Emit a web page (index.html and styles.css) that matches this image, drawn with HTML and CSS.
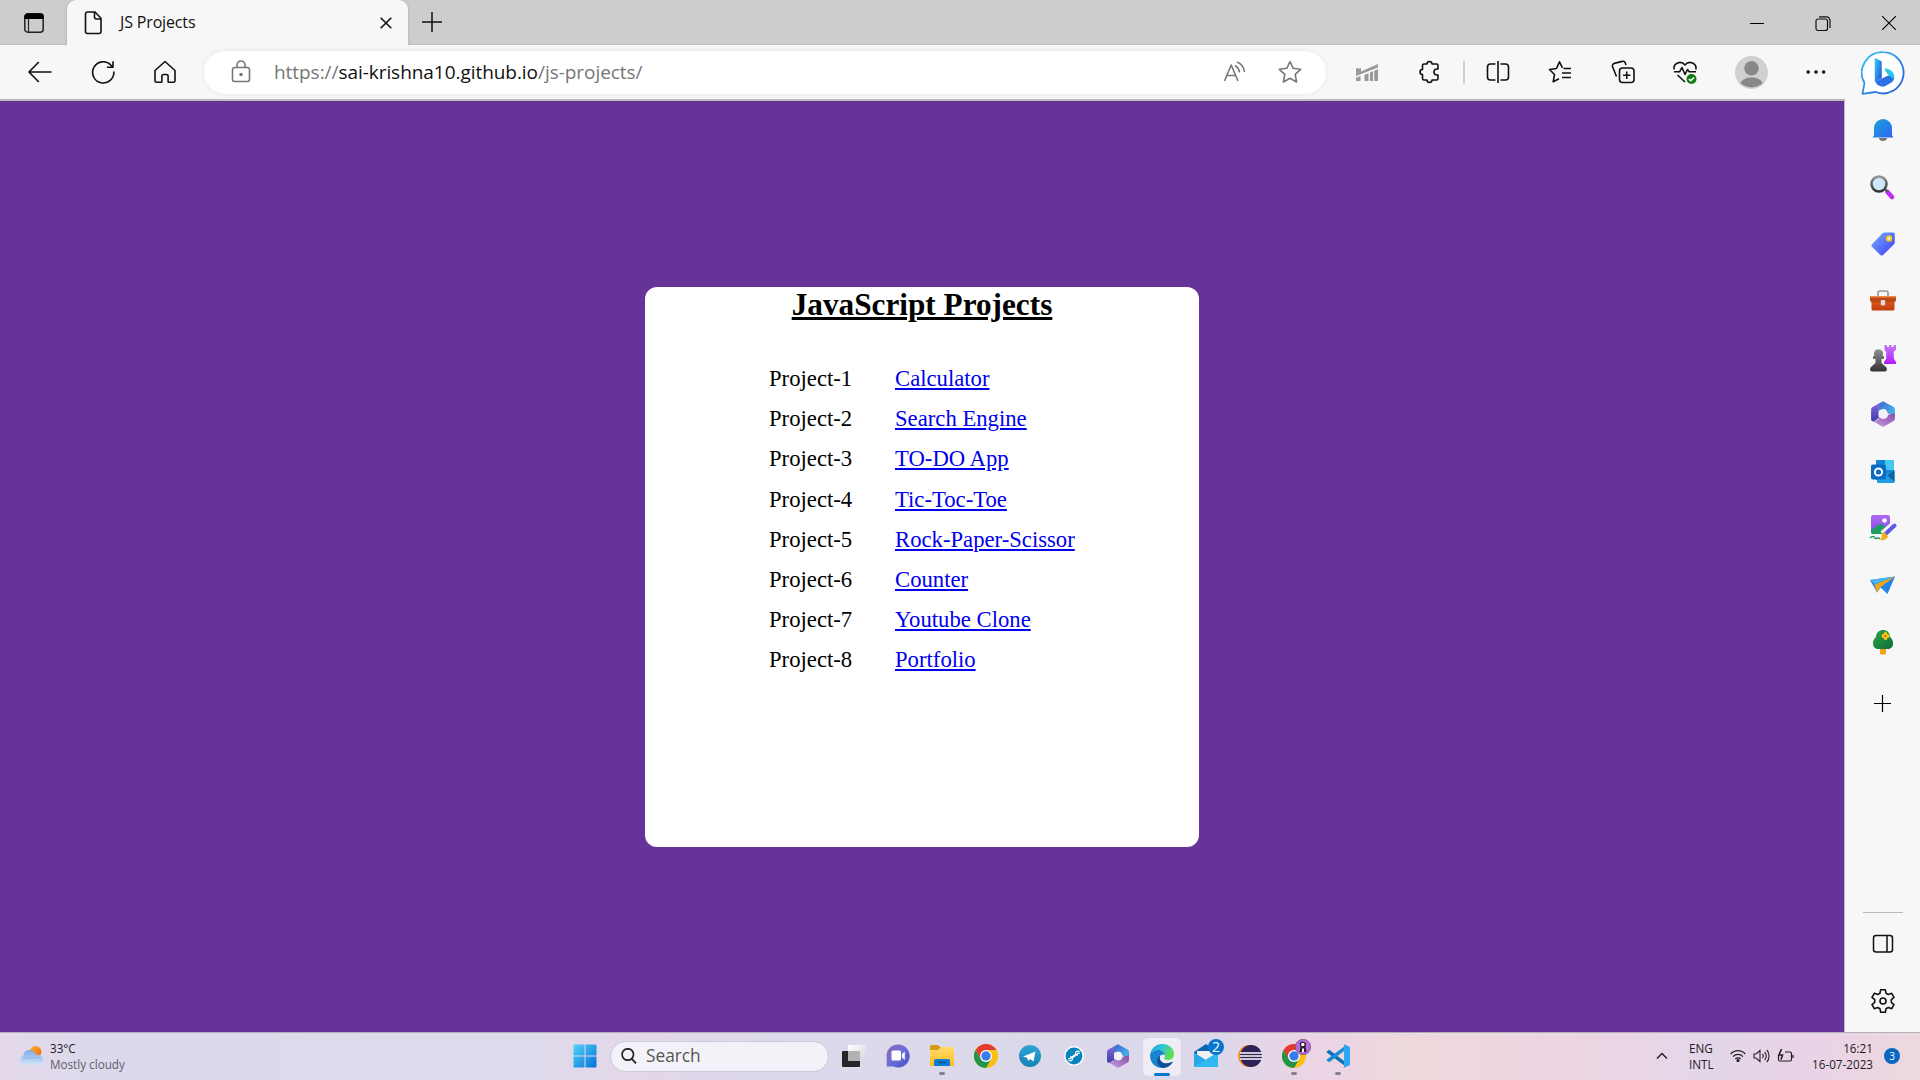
FILE: index.html
```html
<!DOCTYPE html>
<html lang="en">
<head>
<meta charset="utf-8">
<title>JS Projects</title>
<link rel="stylesheet" href="styles.css">
</head>
<body>
<svg class="defs" width="0" height="0" aria-hidden="true">
  <defs>
    <linearGradient id="blue" x1="0" y1="0" x2="1" y2="1"><stop offset="0" stop-color="#35c4f5"/><stop offset="1" stop-color="#2453dc"/></linearGradient>
    <linearGradient id="bell" x1="0" y1="0" x2="1" y2="1"><stop offset="0" stop-color="#17a5dc"/><stop offset="1" stop-color="#3264f0"/></linearGradient>
    <linearGradient id="tag" x1="0" y1="0" x2="1" y2="1"><stop offset="0" stop-color="#77b1ff"/><stop offset="1" stop-color="#3a38f5"/></linearGradient>
    <linearGradient id="grey" x1="0" y1="0" x2="0" y2="1"><stop offset="0" stop-color="#929292"/><stop offset="1" stop-color="#333"/></linearGradient>
    <linearGradient id="rook" x1="0" y1="0" x2="0" y2="1"><stop offset="0" stop-color="#c078f5"/><stop offset="1" stop-color="#b31dfa"/></linearGradient>
    <linearGradient id="case" x1="0" y1="0" x2="0" y2="1"><stop offset="0" stop-color="#f06a28"/><stop offset="1" stop-color="#bf3d0c"/></linearGradient>
    <linearGradient id="purp" x1="0" y1="0" x2="0" y2="1"><stop offset="0" stop-color="#b267ee"/><stop offset="1" stop-color="#7a50f0"/></linearGradient>
    <linearGradient id="tree" x1="0" y1="0" x2="1" y2="1"><stop offset="0" stop-color="#34a549"/><stop offset="1" stop-color="#0b6b37"/></linearGradient>
    <linearGradient id="win" x1="0" y1="0" x2="1" y2="1"><stop offset="0" stop-color="#51d2fb"/><stop offset="1" stop-color="#0473d4"/></linearGradient>
    <linearGradient id="chat" x1="0" y1="0" x2="1" y2="1"><stop offset="0" stop-color="#9a62a6"/><stop offset=".45" stop-color="#6e6fd8"/><stop offset="1" stop-color="#4b50c2"/></linearGradient>
    <linearGradient id="fold" x1="0" y1="0" x2="0" y2="1"><stop offset="0" stop-color="#ffdc6b"/><stop offset="1" stop-color="#fbbc22"/></linearGradient>
    <linearGradient id="tele" x1="0" y1="0" x2="0" y2="1"><stop offset="0" stop-color="#2fa5d6"/><stop offset="1" stop-color="#1781b5"/></linearGradient>
    <linearGradient id="edgeTop" x1="0" y1="0" x2="1" y2=".4"><stop offset="0" stop-color="#1a9fe0"/><stop offset=".5" stop-color="#2cc4d2"/><stop offset="1" stop-color="#5fe052"/></linearGradient>
    <linearGradient id="mA" x1="0" y1="0" x2="1" y2="1"><stop offset="0" stop-color="#3d63cf"/><stop offset="1" stop-color="#46c4ee"/></linearGradient>
    <linearGradient id="mB" x1="0" y1="0" x2="0" y2="1"><stop offset="0" stop-color="#8b68dc"/><stop offset="1" stop-color="#3b3fa9"/></linearGradient>
    <linearGradient id="mC" x1="0" y1="1" x2="1" y2="0"><stop offset="0" stop-color="#c99ae4"/><stop offset="1" stop-color="#8551a5"/></linearGradient>
    <linearGradient id="sun" x1="0" y1="0" x2="1" y2="1"><stop offset="0" stop-color="#fcb32c"/><stop offset="1" stop-color="#f06a14"/></linearGradient>
    <linearGradient id="cloud" x1="0" y1="0" x2="0" y2="1"><stop offset="0" stop-color="#7fa8e8"/><stop offset="1" stop-color="#d3e7fb"/></linearGradient>
    <linearGradient id="glass" x1="0" y1="0" x2="1" y2="1"><stop offset="0" stop-color="#fff"/><stop offset="1" stop-color="#d5d2dc"/></linearGradient>
    <symbol id="m365" viewBox="0 0 24 24">
      <path d="M8 2.500 12 .2l9.500 5.200c1.200.8 1.500 1.600 1.500 3V15l-7-4c0-3-3-4.500-6-3L7.500 9Z" fill="url(#mA)"/>
      <path d="M9.500 1.500 2.500 5.500C1.300 6.200 1 7 1 8.500v8c0 1.800 1 2.700 3 2.200L8 16V5c0-1.500.5-2.700 1.500-3.500Z" fill="url(#mB)"/>
      <path d="m2.300 18.200 8 4.800c1.200.7 2.200.7 3.400 0l7.600-4.300c1.200-.7 1.700-1.700 1.700-3V11l-6.500 2c0 3-3 4-5.500 3.200L8 14.500v2.200c-2 1.800-3.900 2.300-5.700 1.500Z" fill="url(#mC)"/>
      <circle cx="12" cy="12" r="4.100" fill="#f3f1f8"/>
    </symbol>
    <symbol id="chrome" viewBox="0 0 24 24">
      <circle cx="12" cy="12" r="12" fill="#fbbf12"/>
      <path d="M1.600 6A12 12 0 0 1 22.400 6H12L6.800 15Z" fill="#e33b2e"/>
      <path d="M1.600 6A12 12 0 0 0 12 24l5.200-9-5.200 2-5.200-2Z" fill="#21964a"/>
      <circle cx="12" cy="12" r="6" fill="#fff"/><circle cx="12" cy="12" r="4.700" fill="#377bf0"/>
    </symbol>
  </defs>
</svg>

<header class="titlebar">
  <div class="workspace"><svg width="22" height="22" viewBox="0 0 22 22"><rect x="1.800" y="1.800" width="18.400" height="18.400" rx="3" fill="none" stroke="#222" stroke-width="1.500"/><path d="M1.500 7V4.500a3 3 0 0 1 3-3h13a3 3 0 0 1 3 3V7Z"/><path d="M5.500 7v13" stroke="#222" stroke-width="1.200"/></svg></div>
  <div class="tab">
    <svg width="18" height="24" viewBox="0 0 18 24" fill="none" stroke="#111" stroke-width="1.600"><path d="M3.500 1H11l6 6.200v13.300a2 2 0 0 1-2 2H3.500a2 2 0 0 1-2-2V3a2 2 0 0 1 2-2Z"/><path d="M10.500 1v5a2 2 0 0 0 2 2H17"/></svg>
    <span class="tab-title">JS Projects</span>
    <svg class="tab-close" width="12" height="12" viewBox="0 0 12 12" stroke="#111" stroke-width="1.600"><path d="m.7.7 10.600 10.600M11.300.7.7 11.300"/></svg>
  </div>
  <svg class="new-tab" width="20" height="20" viewBox="0 0 20 20" stroke="#111" stroke-width="1.500"><path d="M10 0v20M0 10h20"/></svg>
  <div class="window-buttons">
    <svg width="14" height="14" viewBox="0 0 14 14"><path d="M0 7.500h14" stroke="#000"/></svg>
    <svg width="16" height="16" viewBox="0 0 16 16" fill="none" stroke="#111" stroke-width="1.200"><rect x="1" y="3" width="11.500" height="11.500" rx="2"/><path d="M4 .8h7.500a3.500 3.500 0 0 1 3.500 3.500V12"/></svg>
    <svg width="14" height="14" viewBox="0 0 14 14" stroke="#000" stroke-width="1.100"><path d="m0 0 14 14M14 0 0 14"/></svg>
  </div>
</header>

<nav class="toolbar">
  <div class="tool"><svg width="24" height="24" viewBox="0 0 24 24"><path d="M23.500 12H1M10.800 2 1 12l9.800 10"/></svg></div>
  <div class="tool"><svg width="24" height="24" viewBox="0 0 24 24"><path d="M22.800 11.500A10.600 10.600 0 1 1 20 5.200L21.800 7M22 1.200V7.200h-6"/></svg></div>
  <div class="tool"><svg width="24" height="24" viewBox="0 0 24 24"><path d="M2 10.500 12 1.500l10 9v10.300a1.500 1.500 0 0 1-1.500 1.500H16a.9.900 0 0 1-.9-.9v-5.300A1.600 1.600 0 0 0 13.500 14.500h-3a1.600 1.600 0 0 0-1.600 1.600v5.300a.9.900 0 0 1-.9.900H3.500A1.500 1.500 0 0 1 2 20.800Z"/></svg></div>
  <div class="address">
    <svg class="lock" width="20" height="24" viewBox="0 0 20 24"><rect x="1.500" y="7.500" width="17" height="14" rx="2.200"/><path d="M6 7.500V5a4 4 0 0 1 8 0v2.500"/><circle cx="10" cy="14.500" r="1" fill="#666"/></svg>
    <span class="url">https://<b>sai-krishna10.github.io</b>/js-projects/</span>
    <svg class="read" width="24" height="24" viewBox="0 0 24 24"><path d="m1.500 21 6.700-16 6.800 16M4 15.500h8.500M12 5.500a9 9 0 0 1 4.500 7M14 2a12 12 0 0 1 7.500 10"/></svg>
    <svg width="24" height="24" viewBox="0 0 24 24"><path d="m12 1.500 3.200 6.800 7.500 1-5.500 5.100 1.400 7.600-6.600-3.700-6.600 3.700 1.400-7.600-5.500-5.100 7.500-1Z"/></svg>
  </div>
  <div class="tool after-address"><svg width="24" height="24" viewBox="0 0 24 24"><g stroke="none" fill="#999"><path d="M1 8.500 3 8l1 .8L6 8v3.500L23 4v3.500L1 16ZM1 17.800l4.500-1.700V21H1ZM9.500 14.700l4-1.500V21h-4ZM15 12.500l3-1.200V21h-3ZM19.200 10.800 23 9.300V21h-3.800Z"/></g></svg></div>
  <div class="tool"><svg width="24" height="24" viewBox="0 0 24 24" stroke-width="1.800"><path d="M7 4h3a2.500 2.500 0 0 1 5 0h4.500A1.500 1.500 0 0 1 21 5.500V9h-1a3 3 0 0 0 0 6h1v3.500a1.500 1.500 0 0 1-1.500 1.500H15a2.500 2.500 0 0 1-5 0H7a1.500 1.500 0 0 1-1.500-1.500V14.500a2.500 2.500 0 0 1 0-5v-4A1.500 1.500 0 0 1 7 4Z"/></svg></div>
  <div class="divider"></div>
  <div class="tool"><svg width="24" height="24" viewBox="0 0 24 24" stroke-width="1.700"><path d="M12 1v22M9.500 4h-5a3 3 0 0 0-3 3v10a3 3 0 0 0 3 3h5M14.500 4h5a3 3 0 0 1 3 3v10a3 3 0 0 1-3 3h-5"/></svg></div>
  <div class="tool"><svg width="24" height="24" viewBox="0 0 24 24"><path d="M14.500 8 11.500 1.800 8.500 8.500l-7 1 5 5-1.300 7.300L11 18.700M15.500 8.500H23M14 13h9M14 17.500h9"/></svg></div>
  <div class="tool"><svg width="24" height="24" viewBox="0 0 24 24"><rect x="8.500" y="8" width="14.500" height="14.500" rx="3"/><path d="M15.750 11.500v7.500M12 15.250h7.500M5.500 16.500 1.500 6.500a2.500 2.500 0 0 1 1.700-3.100l8-2A2.500 2.500 0 0 1 14.300 3l.7 2"/></svg></div>
  <div class="tool"><svg width="24" height="24" viewBox="0 0 24 24"><path d="M1.200 9.500C-.2 3 8 0 12 5c4-5 12.200-2 10.800 4.500M1 11.800h5.500L9 7.500l3 7 2.500-5 1.700 2.300H23M4.500 15l7.500 7"/><circle cx="18.500" cy="19" r="5" fill="#107c10" stroke="none"/><path class="tick" d="m16 19 1.800 1.800 3.200-3.300"/></svg></div>
  <div class="tool profile"><svg width="33" height="33" viewBox="0 0 33 33"><circle cx="16.500" cy="16.500" r="16.500" fill="#d2d0ce" stroke="none"/><circle cx="16.500" cy="12.300" r="7.200" fill="#8a8886" stroke="none"/><path d="M5.500 27C8 19.500 25 19.500 27.500 27a16 16 0 0 1-22 0Z" fill="#8a8886" stroke="none"/></svg></div>
  <div class="tool more"><svg width="24" height="24" viewBox="0 0 24 24"><g fill="#111" stroke="none"><circle cx="4.200" cy="12" r="1.800"/><circle cx="12" cy="12" r="1.800"/><circle cx="19.600" cy="12" r="1.800"/></g></svg></div>
  <div class="tool bing"><svg width="44" height="44" viewBox="0 0 44 44"><path d="M22 1.200A20.600 20.600 0 1 1 14.500 41L1.500 42.800 3.500 32A20.600 20.600 0 0 1 22 1.200Z" fill="#fff" stroke="url(#blue)" stroke-width="1.800"/><path d="m14.500 8 5.500 3v15.500L14.500 30Z" fill="url(#blue)" stroke="url(#blue)" stroke-width="1.500"/><path d="M14.500 30.500 26 25l6-2c2.500 3 1 7-2 8.800l-6 3.500c-3 1.500-9-1.300-9.500-4.800Z" fill="#2c72e3" stroke="none"/><path d="M23.500 17c7 1.500 11 5 9 11-3-3.500-6.500-3-9-11Z" fill="#28c8ea" stroke="none"/></svg></div>
</nav>

<div class="browser-body">
  <main class="page">
    <section class="card">
      <h1>JavaScript Projects</h1>
      <div class="projects">
        <span>Project-1</span><a href="#">Calculator</a>
        <span>Project-2</span><a href="#">Search Engine</a>
        <span>Project-3</span><a href="#">TO-DO App</a>
        <span>Project-4</span><a href="#">Tic-Toc-Toe</a>
        <span>Project-5</span><a href="#">Rock-Paper-Scissor</a>
        <span>Project-6</span><a href="#">Counter</a>
        <span>Project-7</span><a href="#">Youtube Clone</a>
        <span>Project-8</span><a href="#">Portfolio</a>
      </div>
    </section>
  </main>
  <aside class="sidebar">
    <div class="side"><svg width="26" height="26" viewBox="0 0 26 26"><path d="M9 21h8c0 4-8 4-8 0Z" fill="#747474"/><path d="M4 18V11a9 9 0 0 1 18 0v7l1.300 2.500H2.700Z" fill="url(#bell)"/></svg></div>
    <div class="side"><svg width="26" height="26" viewBox="0 0 26 26"><path d="m17.500 18 4.500 5" stroke="#c02df0" stroke-width="4.500" stroke-linecap="round"/><path d="m14 14 4 4" stroke="#555" stroke-width="2"/><circle cx="9" cy="10" r="7.500" fill="#cce7fb" stroke="url(#grey)" stroke-width="2.600"/></svg></div>
    <div class="side"><svg width="26" height="26" viewBox="0 0 26 26"><path d="M14.500 1.500H23A1.800 1.800 0 0 1 24.800 3.300V11c0 1-.3 1.700-1 2.400L13 24c-.8.8-1.800.8-2.600 0L2 15.800c-.8-.8-.8-1.800 0-2.600L12.500 2.300c.6-.5 1.200-.8 2-.8Z" fill="url(#tag)"/><circle cx="19" cy="7.500" r="2.300" fill="#e7eef8" stroke="#f6c712" stroke-width="1.800"/></svg></div>
    <div class="side"><svg width="28" height="26" viewBox="0 0 28 26"><path d="M9 8V5a2 2 0 0 1 2-2h6a2 2 0 0 1 2 2v3" fill="none" stroke="#999" stroke-width="1.700"/><rect x="2.500" y="8" width="23" height="14.500" rx="1.500" fill="url(#case)"/><path d="M1 8h26v3.500a3 3 0 0 1-3 3H4a3 3 0 0 1-3-3Z" fill="#bd4717"/><path d="M1 8h26v1.500H1Z" fill="#ef8b4c"/><rect x="11.800" y="12" width="4.400" height="5.500" rx="1" fill="#ddd"/></svg></div>
    <div class="side"><svg width="28" height="28" viewBox="0 0 28 28"><path d="M15.500 1h2.500v2h2V1h2.500v2h2V1H27v4.500L24.800 8v6.500L27 18v2H15v-2l2.200-3.500V8L15.500 5.500Z" fill="url(#rook)"/><path d="M5.500 12A4.600 4.600 0 1 1 13.500 12h1.500v3h-2.500v4l4.500 4c1.500 1.300 1 4.500-1 4.500H3c-2 0-2.500-3.200-1-4.500l4.500-4v-4H4v-3Z" fill="url(#grey)"/></svg></div>
    <div class="side"><svg width="26" height="26"><use href="#m365"/></svg></div>
    <div class="side"><svg width="26" height="26" viewBox="0 0 26 26"><path d="M6 2h18v20H6Z" fill="#1683d4"/><path d="M15 2h9v10h-9Z" fill="#45c7f4"/><path d="m7 20 17.500-7.500V24a1 1 0 0 1-1 1H8a1 1 0 0 1-1-1Z" fill="#219ee2"/><path d="m17 17 7.500-4.500V24Z" fill="#1263a2"/><rect x="1" y="6.500" width="15" height="15" rx="1.800" fill="#0b6ac2"/><circle cx="8.500" cy="14" r="3.600" fill="none" stroke="#fff" stroke-width="2"/></svg></div>
    <div class="side"><svg width="28" height="28" viewBox="0 0 28 28"><rect x="2" y="1" width="19" height="19" rx="2.200" fill="url(#purp)"/><circle cx="15.500" cy="6.500" r="2.300" fill="#fff"/><path d="m2 16 8-5.500c1.300-.8 2-.8 3.200 0L21 16v2a2 2 0 0 1-2 2H4a2 2 0 0 1-2-2Z" fill="#209b64"/><path d="M14 20.500 27 9.500" stroke="#f7f7f7" stroke-width="8"/><path d="m17.500 19 8-7.500" stroke="#6258eb" stroke-width="4" stroke-linecap="round"/><path d="M14.500 17.500 19 22c-1 4-5 5-8 4 2.500-2 1-6 3.500-8.500Z" fill="#f2b01b"/><path d="M1 24c2-2 4-2 5 0s3-2 5 1" fill="none" stroke="#22976c" stroke-width="1.500"/></svg></div>
    <div class="side"><svg width="28" height="26" viewBox="0 0 28 26"><path d="m1 8 25-3.500-7.500 17.500-7-6.500-3.500 5Z" fill="#2585e8"/><path d="M1 8 26 4.500 6 12Z" fill="#49b5f5"/><path d="M5.500 12.500 26 4.500 11 15.500l-3 5.500Z" fill="#f1a416"/></svg></div>
    <div class="side"><svg width="26" height="26" viewBox="0 0 26 26"><rect x="10" y="18" width="6" height="7.500" rx="1" fill="#f1a01c"/><path d="M6 8C6-1.500 20-1.500 20 8c5 4 3.500 12-2 12H8C2.500 20 1 12 6 8Z" fill="url(#tree)"/><g fill="#ffc51c"><circle cx="15.500" cy="5" r="1.900"/><circle cx="15.500" cy="9" r="1.900"/><circle cx="13.500" cy="7" r="1.900"/><circle cx="17.500" cy="7" r="1.900"/></g><circle cx="15.500" cy="7" r="1.200" fill="#d46b08"/></svg></div>
    <div class="side add"><svg width="17" height="17" viewBox="0 0 17 17" stroke="#000" stroke-width="1.200"><path d="M8.500 0v17M0 8.500h17"/></svg></div>
    <div class="side-bottom">
      <div class="side"><svg width="22" height="22" viewBox="0 0 22 22" fill="none" stroke="#111" stroke-width="1.500"><rect x="1.500" y="2.500" width="19" height="16.500" rx="2.500"/><path d="M15 2.500V19"/></svg></div>
      <div class="side"><svg width="26" height="26" viewBox="0 0 26 26" fill="none" stroke="#111" stroke-width="1.600" stroke-linejoin="round"><circle cx="13" cy="13" r="3"/><path d="M10.700 1.700h4.600l.7 3.500 2.300 1.300 3.400-1.200L24 9.300 21.300 11.700v2.600L24 16.700l-2.300 4-3.400-1.200L16 20.800l-.7 3.500h-4.600l-.7-3.500-2.300-1.300-3.400 1.200-2.300-4 2.700-2.400v-2.600L2 9.300l2.300-4 3.400 1.200L10 5.200Z"/></svg></div>
    </div>
  </aside>
</div>

<footer class="taskbar">
  <div class="weather">
    <svg width="26" height="24" viewBox="0 0 26 24"><circle cx="17.500" cy="8" r="6" fill="url(#sun)"/><path d="M6 21a5 5 0 0 1-.5-9.500C6 4.500 15.500 4.500 18 10.500 27 10 27 21 20 21Z" fill="url(#cloud)"/><path d="M6 15c5-3 8 0 10-1s5-1 7 1" fill="none" stroke="#8fb5ea"/></svg>
    <div class="weather-text"><span>33°C</span><span class="muted">Mostly cloudy</span></div>
  </div>
  <div class="apps">
    <div class="app"><svg width="24" height="24" viewBox="0 0 24 24" fill="url(#win)"><path d="M1.500.5h10v11H.5v-10a1 1 0 0 1 1-1ZM12.500.5h10a1 1 0 0 1 1 1v10h-11ZM.5 12.500h11v11h-10a1 1 0 0 1-1-1ZM12.500 12.500h11v10a1 1 0 0 1-1 1h-10Z"/></svg></div>
    <div class="search"><svg width="16" height="16" viewBox="0 0 16 16" fill="none" stroke="#222" stroke-width="1.700"><circle cx="6.800" cy="6.500" r="5.700"/><path d="m10.800 10.800 4.200 4.500"/></svg><span>Search</span></div>
    <div class="app"><svg width="26" height="24" viewBox="0 0 26 24"><rect x="1" y="7" width="18" height="16" rx="1" fill="#262628"/><rect x="7" y="1" width="18" height="16" rx="1" fill="url(#glass)"/><path d="M7 7h12v10H7Z" fill="#b2b2b3"/></svg></div>
    <div class="app"><svg width="24" height="24" viewBox="0 0 24 24"><path d="M12 .5a11.500 11.500 0 1 1-4.500 22H.7V14A11.500 11.500 0 0 1 12 .5Z" fill="url(#chat)"/><rect x="5.500" y="6.500" width="9.500" height="10" rx="1.500" fill="#fff"/><path d="m16 10 2.800-2.500v8.500L16 13.500Z" fill="#fff"/></svg></div>
    <div class="app running"><svg width="24" height="24" viewBox="0 0 24 24"><path d="M0 2a1 1 0 0 1 1-1h7l2 2h13a1 1 0 0 1 1 1v8H0Z" fill="#d69a10"/><path d="M0 6h8l3-3h12a1 1 0 0 1 1 1v18H0Z" fill="url(#fold)"/><path d="M4 22v-5a2 2 0 0 1 2-2h12a2 2 0 0 1 2 2v5Z" fill="#0f7cd4"/><path d="M8 18.500h8" stroke="#0a4f91" stroke-width="1.500"/></svg></div>
    <div class="app"><svg width="24" height="24"><use href="#chrome"/></svg></div>
    <div class="app"><svg width="22" height="22" viewBox="0 0 22 22"><circle cx="11" cy="11" r="11" fill="url(#tele)"/><path d="m4 11.500 12.500-5-2 10-3.500-2.500-2 2-.8-3.300Z" fill="#fff"/></svg></div>
    <div class="app"><svg width="20" height="20" viewBox="0 0 20 20"><circle cx="10" cy="10" r="9.200" fill="#0984bd" stroke="#fff" stroke-width="1.500"/><path d="m7.500 11.800 5-3.600" stroke="#fff" stroke-width="2.200"/><path d="M4.300 12.600 6.400 12.700 7 10.900A2.100 2.100 0 1 1 4.500 14M15.700 7.400 13.600 7.300 13 9.100A2.100 2.100 0 1 1 15.500 6" stroke="#fff" stroke-width="1.200" fill="none"/></svg></div>
    <div class="app"><svg width="24" height="24"><use href="#m365"/></svg></div>
    <div class="app active"><svg width="24" height="24" viewBox="0 0 24 24"><path d="M.1 11C1 4 6 0 12.300 0 19 0 24 4.500 24 10c0 4-3 6-6 6-2.500 0-4-1-4-2 .8-1 1-1.500 1-2.500 0-3-3-5.500-6.500-5.500C4.500 6 1.300 8 .1 11Z" fill="url(#edgeTop)"/><path d="M.1 11C1.300 7.500 4.500 6 8.500 6c3.500 0 6.500 2.500 6.500 5.500-1-1.500-3.500-1.500-4.800.5C8 15 10 21 16 23.300 8 26-.5 20 .1 11Z" fill="#1784d2"/><path d="M10.200 12c-1.700 4 2 7.300 6.300 7.300 2.500 0 4.200-.8 5.500-1.500.8-.4 1 .1.600.7C18 25.500 8 26 7 17c-.2-2.500 1.200-4.300 3.200-5Z" fill="#0d4f99"/></svg></div>
    <div class="app mail"><svg width="24" height="24" viewBox="0 0 24 24"><path d="M0 8 12 0l12 8v14H0Z" fill="#0b66ae"/><path d="M3 7h18v7l-9 6-9-6Z" fill="#f1f1f4"/><path d="M0 8.500 12 16 24 8.500V22a1 1 0 0 1-1 1H1a1 1 0 0 1-1-1Z" fill="#2aa5e8"/><path d="M0 22.500 24 8.500V22a1 1 0 0 1-1 1H1Z" fill="#30b9f0"/></svg><span class="count">2</span></div>
    <div class="app"><svg width="24" height="22" viewBox="0 0 24 22"><circle cx="11" cy="11" r="11" fill="#f7941e"/><circle cx="13" cy="11" r="11" fill="#2c2255"/><path d="M2 8h22M2 11h22M2 14h22" stroke="#fff" stroke-width="1.500"/></svg></div>
    <div class="app running"><svg width="24" height="24"><use href="#chrome"/></svg><span class="avatar"><svg width="16" height="16" viewBox="0 0 16 16"><circle cx="8" cy="8" r="7.700" fill="#b76adb" stroke="#69547a" stroke-width=".7"/><path d="M4.500 13 5.500 8 4.500 4l3-1.500L11 4l-.5 4 1 5Z" fill="#252129"/><circle cx="7.800" cy="5.500" r="1.700" fill="#fff"/><path d="M7 9.500h2v3.500H7Z" fill="#fff"/></svg></span></div>
    <div class="app running"><svg width="24" height="24" viewBox="0 0 24 24"><path d="m1.500 7 1.700-1.200L20 18.500v4.200L1 8.800c-.5-.5-.3-1.300.5-1.800Z" fill="#0b72b8"/><path d="m1.500 17 1.700 1.200L20 5.500V1.300L1 15.200c-.5.500-.3 1.300.5 1.800Z" fill="#168dd5"/><path d="m17.500 0 5.500 2.500c.7.300 1 .8 1 1.500v16c0 .7-.3 1.200-1 1.500L17.500 24c.5-.8.500-1 .5-2V2c0-1 0-1.200-.5-2Z" fill="#2aa7ee"/></svg></div>
  </div>
  <div class="tray">
    <svg class="chevron" width="12" height="8" viewBox="0 0 12 8" fill="none" stroke="#222" stroke-width="1.500"><path d="m1 6.500 5-5 5 5"/></svg>
    <div class="lang"><span>ENG</span><span>INTL</span></div>
    <div class="status">
      <svg width="16" height="14" viewBox="0 0 16 14" fill="none" stroke="#222" stroke-width="1.200"><path d="M.7 5c4-4.500 10.600-4.500 14.600 0M3 7.600c2.800-3 7.200-3 10 0M5.300 10c1.500-1.600 3.900-1.600 5.400 0"/><circle cx="8" cy="11.500" r="1" fill="#222"/></svg>
      <svg width="17" height="14" viewBox="0 0 17 14" fill="none" stroke="#222" stroke-width="1.100"><path d="M1 5h2l4-3.500v11L3 9H1ZM9.500 5c1 1 1 3 0 4M11.700 3c2 2 2 6 0 8M13.800 1c3 3 3 9 0 12"/></svg>
      <svg width="17" height="14" viewBox="0 0 17 14" fill="none" stroke="#222" stroke-width="1.200"><path d="M8 3h5a1.500 1.500 0 0 1 1.500 1.500v6A1.500 1.500 0 0 1 13 12H3a1.500 1.500 0 0 1-1.500-1.500V6M16 6v3"/><path d="M4.500 0 2 6h3.500L4 10.500" stroke-width="1.600"/></svg>
    </div>
    <div class="clock"><span>16:21</span><span>16-07-2023</span></div>
    <span class="notices">3</span>
  </div>
</footer>
</body>
</html>
```
FILE: styles.css
```css
* { box-sizing: border-box; }

body {
  display: flex;
  flex-direction: column;
  width: 1920px;
  height: 1080px;
  margin: 0;
  overflow: hidden;
  background: #f7f7f7;
  font-family: "Open Sans", "Noto Sans", sans-serif;
}

svg { display: block; flex: none; }
.defs { position: absolute; }

.titlebar {
  display: flex;
  height: 45px;
  background: #cdcdcd;
  box-shadow: inset 0 -1px 1px #bdbdbd;
}

.workspace { width: 67px; padding: 12px 0 0 23px; }

.tab {
  display: flex;
  align-items: center;
  width: 341px;
  height: 46px;
  padding: 0 16px 0 17px;
  border-radius: 9px 9px 0 0;
  background: #f7f7f7;
  box-shadow: 0 0 3px #aaa;
  clip-path: inset(0 -4px 0 -4px);
}

.tab-title {
  margin: -3px 0 0 18px;
  font-size: 16px;
  line-height: 20px;
  letter-spacing: -0.15px;
  color: #111;
}

.tab-close { margin-left: auto; }
.new-tab { margin: 12px 0 0 14px; }

.window-buttons {
  display: flex;
  gap: 51px;
  margin: 16px 24px 0 auto;
}

.toolbar {
  display: flex;
  align-items: center;
  height: 54px;
  padding-left: 9px;
  background: #f7f7f7;
}

.toolbar svg { fill: none; stroke: #111; stroke-width: 1.6; stroke-linejoin: round; }
.toolbar .tick { stroke: #fff; }

.tool {
  display: flex;
  flex: none;
  justify-content: center;
  width: 62.5px;
}

.address {
  display: flex;
  align-items: center;
  width: 1122px;
  height: 43px;
  margin-left: 7.500px;
  padding: 0 24px 0 27px;
  border-radius: 22px;
  background: #fff;
  box-shadow: 0 0 5px #e6e6e6;
}

.toolbar .address svg { stroke: #777; }
.lock { margin-right: 23px; }

.url {
  font-size: 19px;
  line-height: 26px;
  letter-spacing: -0.05px;
  color: #767676;
}

.url b { font-weight: 400; color: #111; }
.read { margin: 0 31px 0 auto; }
.after-address { margin-left: 9.500px; }
.divider { width: 2px; height: 23px; margin: 0 2px; background: #d0d0d0; }
.profile { width: 69px; }
.more { width: 61px; }
.bing { width: 73px; padding-top: 1px; }

.browser-body { display: flex; height: 933px; }

.page {
  display: flex;
  align-items: center;
  justify-content: center;
  width: 1845px;
  border-top: 2px solid #bbb;
  border-right: 1px solid #bbb;
  background: #639;
}

.card {
  width: 554px;
  height: 560px;
  border-radius: 12px;
  background: #fff;
  font-family: "Liberation Serif", "Times New Roman", serif;
  color: #000;
}

.card h1 {
  margin: 0;
  font-size: 31.25px;
  line-height: 36px;
  text-align: center;
  text-decoration: underline;
}

.projects {
  display: grid;
  grid-template-columns: 126px 1fr;
  grid-auto-rows: 40.2px;
  align-items: center;
  margin-top: 36.4px;
  padding-left: 124px;
  font-size: 22.7px;
  line-height: 26px;
}

.projects a { color: #00e; }

.sidebar {
  display: flex;
  flex-direction: column;
  width: 75px;
  padding: 3px 0 3px;
}

.side {
  display: flex;
  align-items: center;
  justify-content: center;
  height: 56.8px;
}

.add { height: 68px; }

.side-bottom {
  margin: auto 17px 0 18px;
  padding-top: 2px;
  border-top: 1px solid #b8b8b8;
}

.taskbar {
  display: grid;
  grid-template-columns: 562px 796px 1fr;
  height: 48px;
  border-top: 1px solid #b3adb9;
  background: linear-gradient(90deg, #e4d9ea 0, #dcd9ec 5%, #dedaeb 28%, #e3d7e9 33%, #dbd9eb 41%, #dcd8ea 63%, #ecd4e4 69%, #eed9dc 73%, #edd5e2 82%, #e3d6e9 89%, #ead3e6 95%, #ecd9dd 100%);
}

.weather { display: flex; padding: 11px 0 0 18px; }

.weather-text,
.lang,
.clock {
  display: flex;
  flex-direction: column;
  font-size: 11.700px;
  line-height: 16px;
  color: #1c1c1c;
}

.weather-text { margin: -4px 0 0 6px; }
.muted { color: #63606a; }
.apps { display: flex; align-items: center; padding-left: 1px; }

.app {
  position: relative;
  display: flex;
  flex: none;
  align-items: center;
  justify-content: center;
  width: 44px;
  height: 47px;
  padding-bottom: 1px;
}

.search {
  display: flex;
  flex: none;
  align-items: center;
  gap: 9px;
  width: 219px;
  height: 31px;
  margin: 0 3px 1px;
  padding: 0 0 1px 10px;
  border: 1px solid #cfc8d7;
  border-radius: 16px;
  background: #f4f2f9;
  font-size: 17.300px;
  color: #555;
}

.running::after,
.active::after {
  content: "";
  position: absolute;
  bottom: 5px;
  left: 19px;
  width: 6px;
  height: 3px;
  border-radius: 2px;
  background: #85808e;
}

.active {
  width: 38px;
  height: 38px;
  margin: 0 3px;
  border-radius: 5px;
  background: #efecf6;
}

.active::after { bottom: 0; left: 11px; width: 16px; background: #0878d2; }

.count {
  position: absolute;
  top: 6px;
  right: 4px;
  width: 16px;
  height: 16px;
  border-radius: 50%;
  background: #0675cf;
  color: #fff;
  font-size: 14px;
  line-height: 16px;
  text-align: center;
}

.avatar { position: absolute; top: 6px; right: 5px; }
.tray { display: flex; align-items: center; padding: 0 20px 2px 0; }
.chevron { margin-left: 298px; }
.lang { width: 41px; margin-left: 21px; }
.status { display: flex; gap: 7px; }
.clock { width: 79px; text-align: right; }
.clock span { white-space: nowrap; }

.notices {
  width: 16px;
  height: 16px;
  margin-left: auto;
  border-radius: 50%;
  background: #0867c1;
  color: #fff;
  font-size: 10px;
  line-height: 16px;
  text-align: center;
}
```
